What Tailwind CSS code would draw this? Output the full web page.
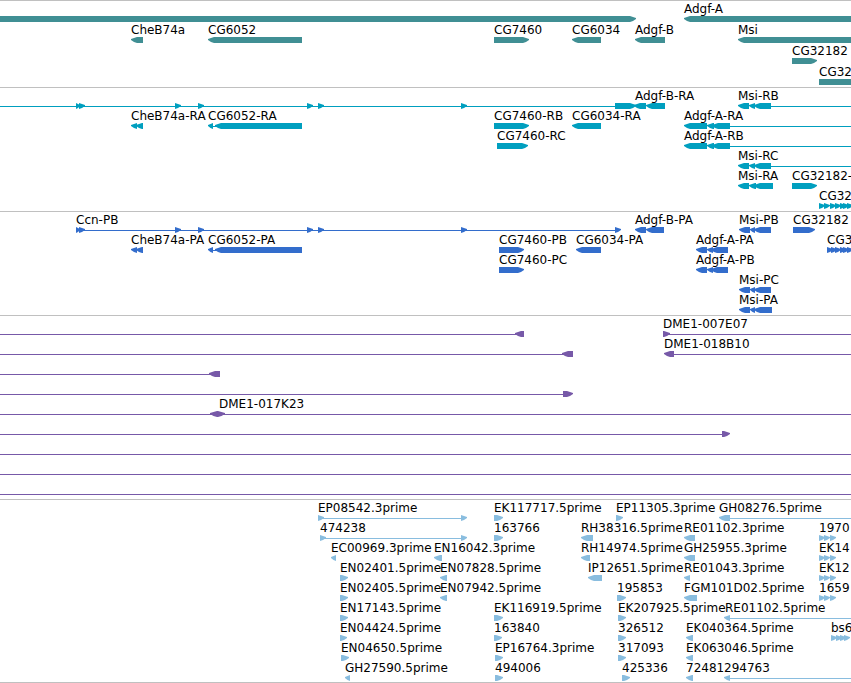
<!DOCTYPE html>
<html lang="en">
<head>
    <meta charset="UTF-8">
    <meta name="viewport" content="width=device-width, initial-scale=1.0">
    <title>Genome browser</title>
    <script src="https://cdn.jsdelivr.net/npm/@tailwindcss/browser@4"></script>
</head>
<body class="bg-white text-black overflow-x-hidden font-['DejaVu_Sans',sans-serif] text-[12px] leading-4">
    <main id="tracks" class="w-full overflow-hidden border-b border-[#c0c0c0]"></main>

    <script>
        // Features that run past the right edge of the view
        const END = 4000;

        // Each row is a list of features: [label, labelX, lines, blocks]
        //   lines:  [from, to]
        //   blocks: [from, to, direction], direction is '<', '>', '<>' or ''
        const right = (...xs) => xs.map(x => [x, x + 6, '>']);
        const ccnExons = [[76, 80, '>'], [79, 85, '>'], ...right(175, 198, 307, 318, 461)];
        const cheB = [[131, 137, '<'], [136, 143, '<']];
        const cg6052 = [[208, 213, '<'], [215, 302, '<']];
        const adgfA = [[684, 707, '<'], [707, 714, '<'], [712, 730, '<']];
        const adgfAP = [[696, 707, '<'], [707, 713, '<'], [711, 728, '<']];
        const msiR = [[738, 749, '<'], [749, 755, '<'], [754, 771, '<']];
        const msiP = [[739, 750, '<'], [750, 755, '<'], [754, 771, '<']];
        const trio = right(819, 824, 830);

        const tracks = [
            {
                color: '#408f94', rowClass: 'relative h-[21px]', pad: 'pb-[2px]',
                rows: [
                    [['', 0, [], [[-20, 636, '>']]], ['Adgf-A', 684, [], [[684, END, '<']]]],
                    [
                        ['CheB74a', 131, [], [[131, 143, '<']]],
                        ['CG6052', 208, [], [[208, 302, '<']]],
                        ['CG7460', 494, [], [[494, 529, '>']]],
                        ['CG6034', 572, [], [[572, 601, '<']]],
                        ['Adgf-B', 635, [], [[635, 665, '<']]],
                        ['Msi', 738, [], [[738, END, '<']]],
                    ],
                    [['CG32182', 792, [], [[792, 817, '>']]]],
                    [['CG32', 819, [], [[819, END, '']]]],
                ],
            },
            {
                color: '#009fbf', rowClass: 'relative h-5', pad: 'pb-[3px]',
                rows: [
                    [
                        ['', 0, [[-20, 615]], [...ccnExons, [615, 636, '>']]],
                        ['Adgf-B-RA', 635, [], [[634, 646, '<'], [646, 665, '<']]],
                        ['Msi-RB', 738, [[771, END]], msiR],
                    ],
                    [
                        ['CheB74a-RA', 131, [], cheB],
                        ['CG6052-RA', 208, [[212, 217]], cg6052],
                        ['CG7460-RB', 494, [], [[494, 529, '>']]],
                        ['CG6034-RA', 572, [], [[572, 601, '<']]],
                        ['Adgf-A-RA', 684, [[730, END]], adgfA],
                    ],
                    [['CG7460-RC', 497, [], [[497, 528, '>']]], ['Adgf-A-RB', 684, [[730, END]], adgfA]],
                    [['Msi-RC', 738, [[771, END]], msiR]],
                    [
                        ['Msi-RA', 738, [], [[738, 749, '<'], [749, 756, '<'], [754, 773, '<']]],
                        ['CG32182-', 792, [], [[792, 817, '>']]],
                    ],
                    [['CG32', 819, [], right(819, 824, 830, 835, 840, 843, 847)]],
                ],
            },
            {
                color: '#336dcc', rowClass: 'relative h-5', pad: 'pb-[3px]',
                rows: [
                    [
                        ['Ccn-PB', 76, [[76, 616]], [...ccnExons, ...right(615)]],
                        ['Adgf-B-PA', 635, [], [[635, 646, '<'], [646, 664, '<']]],
                        ['Msi-PB', 739, [], msiP],
                        ['CG32182', 793, [], [[793, 815, '>']]],
                    ],
                    [
                        ['CheB74a-PA', 131, [], cheB],
                        ['CG6052-PA', 208, [[212, 217]], cg6052],
                        ['CG7460-PB', 499, [], [[499, 524, '>']]],
                        ['CG6034-PA', 576, [], [[576, 601, '<']]],
                        ['Adgf-A-PA', 696, [], adgfAP],
                        ['CG3', 827, [], right(827, 831, 835, 840, 843, 847)],
                    ],
                    [['CG7460-PC', 499, [], [[499, 524, '>']]], ['Adgf-A-PB', 696, [], adgfAP]],
                    [['Msi-PC', 739, [], msiP]],
                    [['Msi-PA', 739, [], [[739, 750, '<'], [750, 755, '<'], [754, 772, '<']]]],
                ],
            },
            {
                color: '#7759a8', rowClass: 'relative h-5', pad: 'pb-[3px]',
                rows: [
                    [['', 0, [[-20, 518]], [[515, 524, '<']]], ['DME1-007E07', 663, [[664, END]], [[663, 670, '>']]]],
                    [['', 0, [[-20, 565]], [[562, 573, '<']]], ['DME1-018B10', 664, [[674, END]], [[664, 674, '<']]]],
                    [['', 0, [[-20, 212]], [[209, 220, '<']]]],
                    [['', 0, [[-20, 563]], [[563, 573, '>']]]],
                    [['DME1-017K23', 219, [[-20, END]], [[210, 225, '<>']]]],
                    [['', 0, [[-20, 722]], [[722, 730, '>']]]],
                    [['', 0, [[-20, END]], []]],
                    [['', 0, [[-20, END]], []]],
                    [['', 0, [[-20, END]], []]],
                ],
            },
            {
                color: '#89bddf', rowClass: 'relative h-5', pad: 'pb-[2px]',
                rows: [
                    [
                        ['EP08542.3prime', 318, [[318, 462]], right(318, 461)],
                        ['EK117717.5prime', 494, [], [[494, 503, '>']]],
                        ['EP11305.3prime', 616, [], [[616, 623, '>']]],
                        ['GH08276.5prime', 719, [[730, END]], [[719, 730, '<']]],
                    ],
                    [
                        ['474238', 320, [[320, 462]], right(320, 461)],
                        ['163766', 494, [], [[494, 503, '>']]],
                        ['RH38316.5prime', 581, [], [[581, 593, '<']]],
                        ['RE01102.3prime', 684, [], [[684, 695, '<']]],
                        ['1970', 819, [], trio],
                    ],
                    [
                        ['EC00969.3prime', 331, [], [[331, 336, '<']]],
                        ['EN16042.3prime', 434, [], [[434, 442, '<']]],
                        ['RH14974.5prime', 581, [], [[581, 590, '<']]],
                        ['GH25955.3prime', 684, [], [[684, 695, '<']]],
                        ['EK14', 819, [], trio],
                    ],
                    [
                        ['EN02401.5prime', 340, [], [[340, 348, '>']]],
                        ['EN07828.5prime', 440, [], [[440, 447, '<']]],
                        ['IP12651.5prime', 588, [], [[588, 602, '<']]],
                        ['RE01043.3prime', 684, [], [[684, 690, '<']]],
                        ['EK12', 819, [], trio],
                    ],
                    [
                        ['EN02405.5prime', 340, [], [[340, 348, '>']]],
                        ['EN07942.5prime', 440, [], [[440, 447, '<']]],
                        ['195853', 617, [], [[617, 626, '>']]],
                        ['FGM101D02.5prime', 684, [], [[684, 697, '<']]],
                        ['1659', 819, [], trio],
                    ],
                    [
                        ['EN17143.5prime', 340, [], [[340, 348, '>']]],
                        ['EK116919.5prime', 494, [], [[494, 503, '>']]],
                        ['EK207925.5prime', 618, [], [[618, 626, '>']]],
                        ['RE01102.5prime', 725, [[730, END]], [[724, 730, '<']]],
                    ],
                    [
                        ['EN04424.5prime', 340, [], [[340, 347, '>']]],
                        ['163840', 494, [], [[494, 502, '>']]],
                        ['326512', 618, [], [[618, 626, '>']]],
                        ['EK040364.5prime', 686, [], [[686, 693, '<']]],
                        ['bs6', 831, [], right(831, 836, 840, 844)],
                    ],
                    [
                        ['EN04650.5prime', 341, [], [[341, 349, '>']]],
                        ['EP16764.3prime', 495, [], [[495, 503, '>']]],
                        ['317093', 618, [], [[618, 626, '>']]],
                        ['EK063046.5prime', 686, [], [[686, 693, '<']]],
                    ],
                    [
                        ['GH27590.5prime', 345, [], [[345, 350, '<']]],
                        ['494006', 495, [], [[495, 503, '>']]],
                        ['425336', 622, [], [[622, 630, '>']]],
                        ['72481', 686, [], [[686, 693, '<']]],
                        ['294763', 724, [[730, END]], [[724, 730, '<']]],
                    ],
                ],
            },
        ];

        // Outline of a block, 6px high, with a head on the side it points to
        function blockPoints([a, b, dir]) {
            const head = Math.min(dir === '<>' ? 7 : 6, b - a);
            const mid = head / 2;
            const points = [];
            if (dir.includes('<')) {
                points.push([a + head, 6], [a + mid, 5], [a, 3], [a, 2], [a + mid, 1], [a + head, 0]);
            } else {
                points.push([a, 6], [a, 0]);
            }
            if (dir.includes('>')) {
                points.push([b - head, 0], [b - mid, 1], [b, 2], [b, 3], [b - mid, 5], [b - head, 6]);
            } else {
                points.push([b, 0], [b, 6]);
            }
            return points.join(' ');
        }

        function drawRow(features, track) {
            const shapes = features.map(([, , lines, blocks]) =>
                lines.map(([a, b]) => `<rect x="${a}" y="3" width="${b - a}" height="1" />`).join('') +
                blocks.map(b => `<polygon points="${blockPoints(b)}" />`).join('')
            ).join('');
            const labels = features.filter(f => f[0]).map(([name, x]) =>
                `<span class="absolute top-0 whitespace-nowrap" style="left: ${x}px">${name}</span>`
            ).join('');
            return `<div class="${track.rowClass}">
                <svg class="absolute top-[15px] left-0 w-full h-[6px]" fill="${track.color}" aria-hidden="true">${shapes}</svg>
                ${labels}
            </div>`;
        }

        document.getElementById('tracks').innerHTML = tracks.map(track =>
            `<section class="border-t border-[#c0c0c0] ${track.pad}">${track.rows.map(row => drawRow(row, track)).join('')}</section>`
        ).join('');
    </script>
</body>
</html>
